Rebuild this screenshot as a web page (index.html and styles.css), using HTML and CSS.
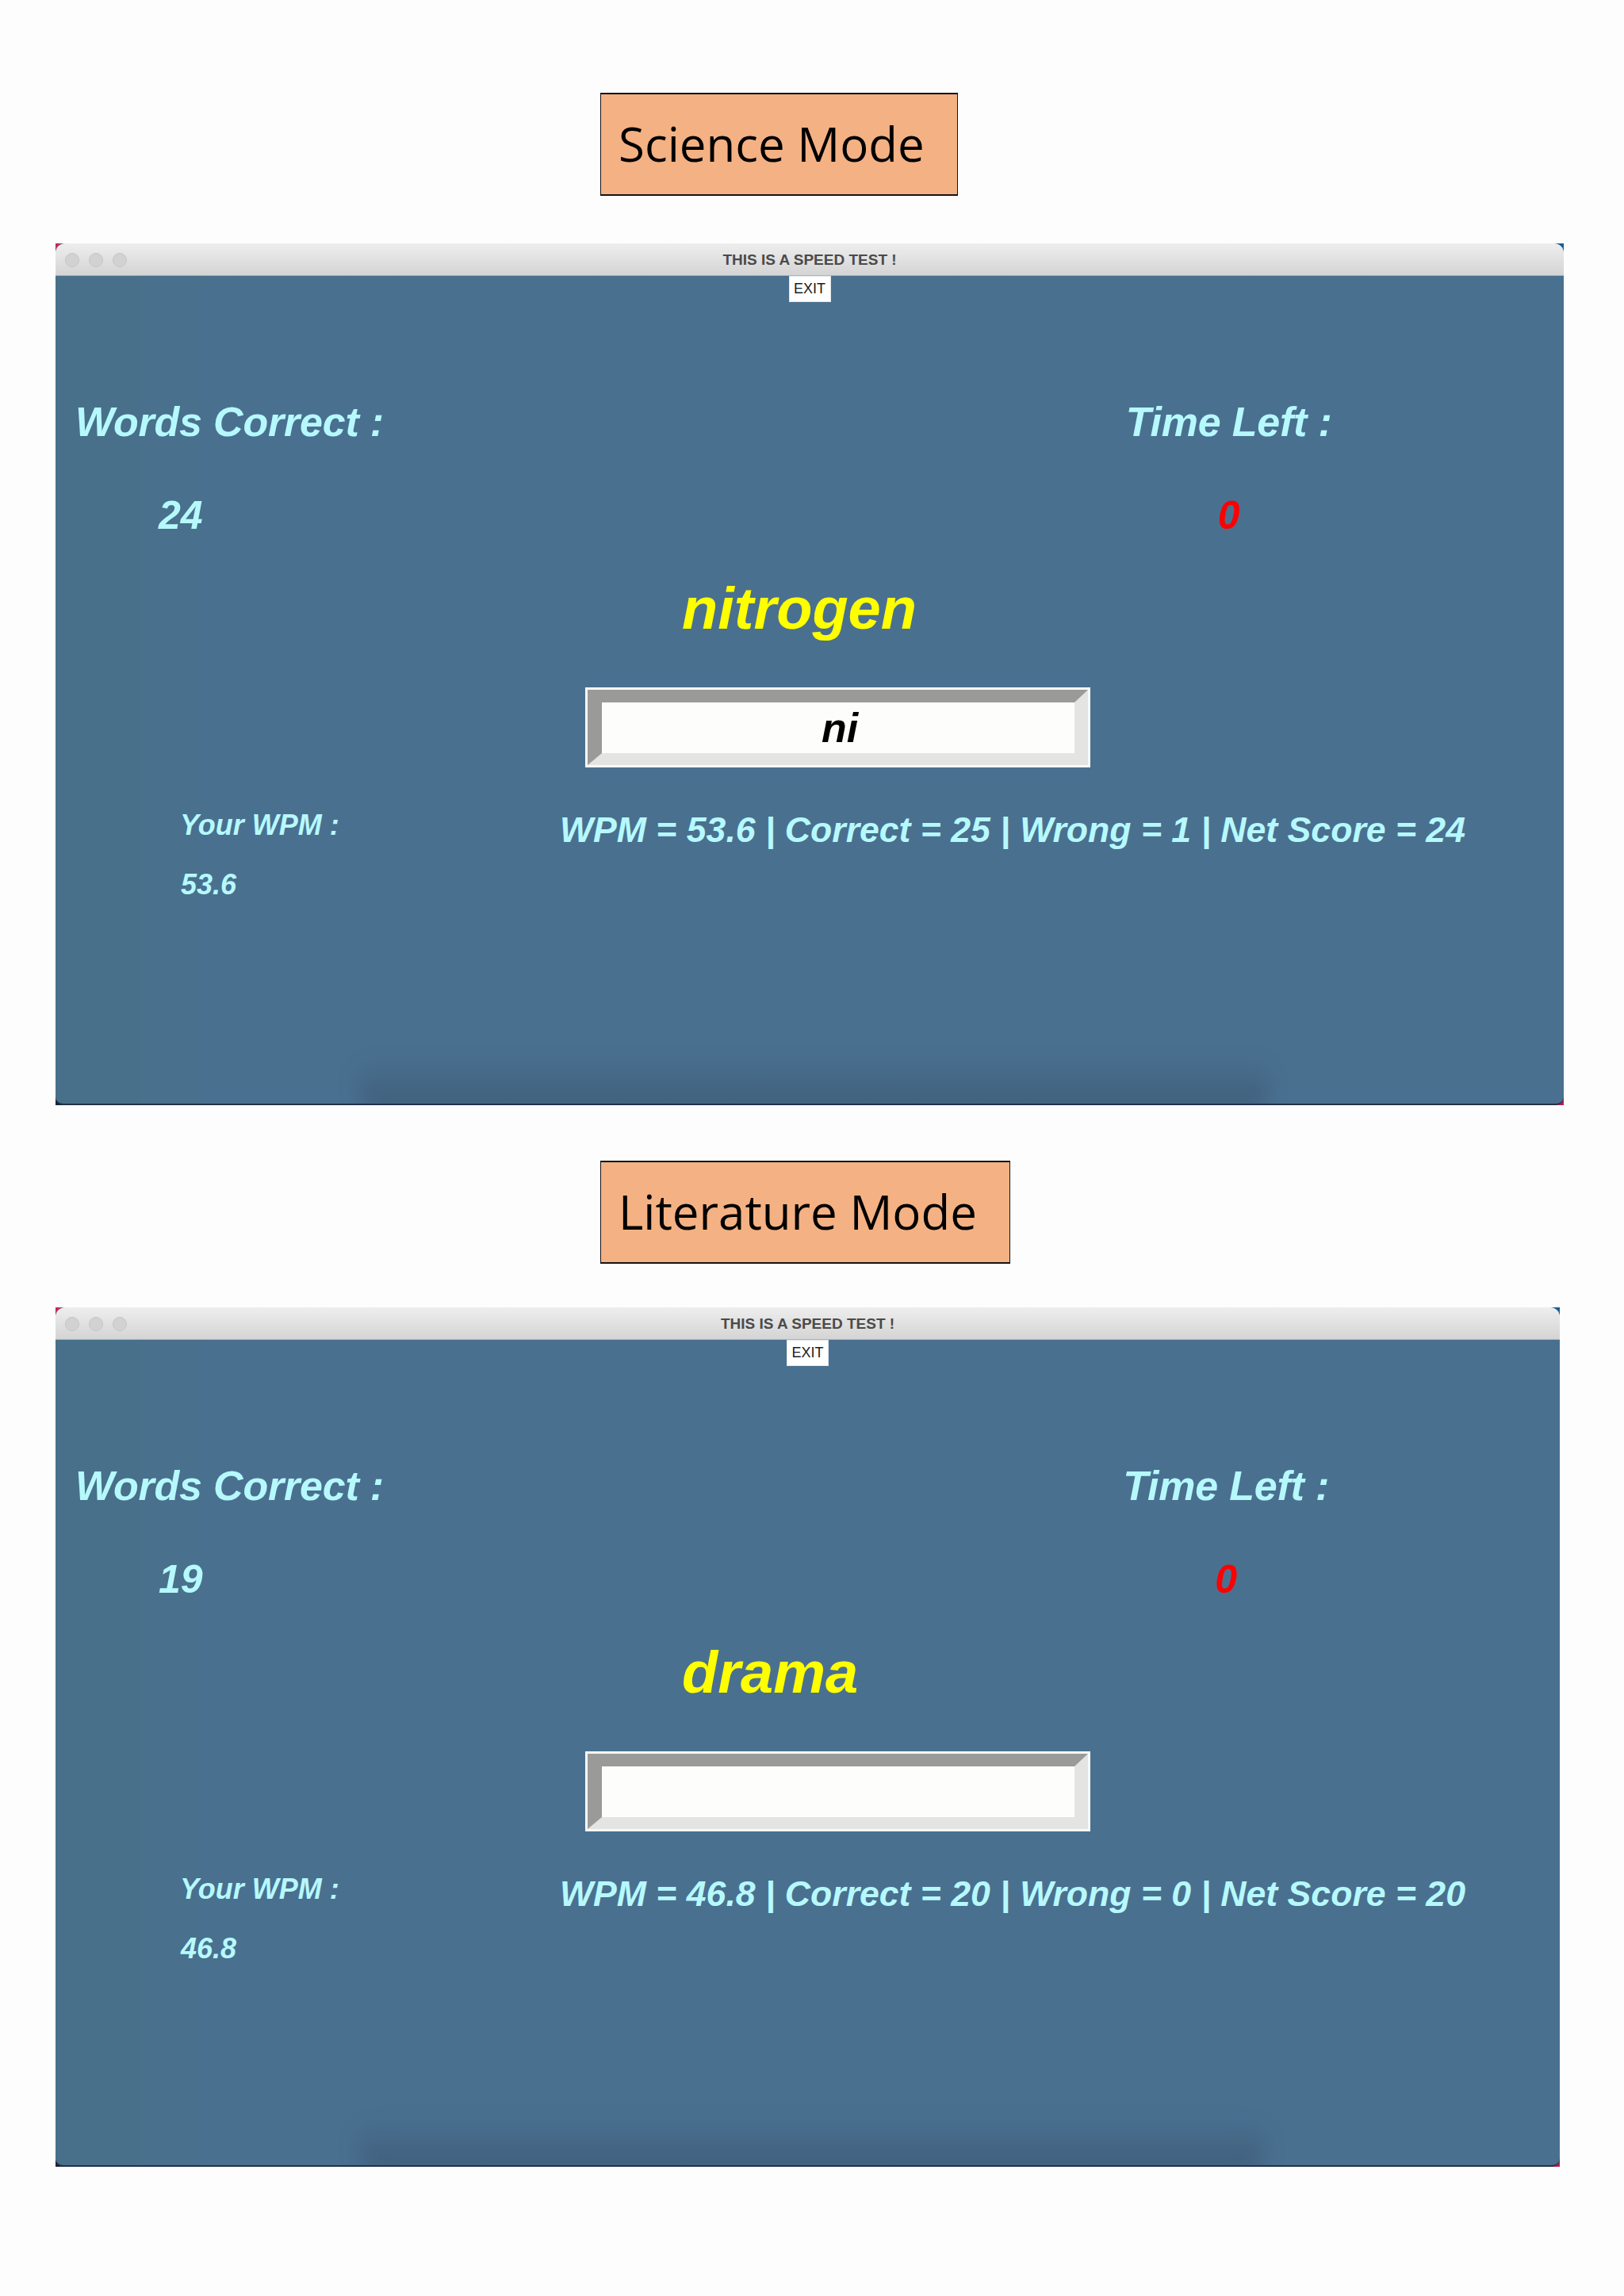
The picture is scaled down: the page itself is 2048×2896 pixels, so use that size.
FILE: index.html
```html
<!DOCTYPE html>
<html lang="en">
<head>
<meta charset="utf-8">
<title>Speed Test Modes</title>
<link rel="stylesheet" href="styles.css">
</head>
<body>
<main class="page">
  <section class="mode mode--science">
    <div class="mode-label">Science Mode</div>
    <div class="window">
      <div class="window-frame">
        <header class="titlebar">
          <div class="lights"><span class="light"></span><span class="light"></span><span class="light"></span></div>
          <div class="title">THIS IS A SPEED TEST !</div>
          <div class="titlebar-spacer"></div>
        </header>
        <div class="window-body">
          <button class="exit" type="button">EXIT</button>
          <div class="scoreboard">
            <div class="stat-label">Words Correct :</div>
            <div class="stat-label">Time Left :</div>
            <div class="stat-value stat-value--words">24</div>
            <div class="stat-value stat-value--time">0</div>
          </div>
          <div class="target-word">nitrogen</div>
          <div class="entry"><div class="entry-bevel"><span class="entry-text">ni</span></div></div>
          <div class="results">
            <div class="wpm-box">
              <div class="wpm-label">Your WPM :</div>
              <div class="wpm-value">53.6</div>
            </div>
            <div class="summary">WPM = 53.6 | Correct = 25 | Wrong = 1 | Net Score = 24</div>
          </div>
        </div>
        <div class="dock-shadow"></div>
      </div>
    </div>
  </section>

  <section class="mode mode--literature">
    <div class="mode-label">Literature Mode</div>
    <div class="window">
      <div class="window-frame">
        <header class="titlebar">
          <div class="lights"><span class="light"></span><span class="light"></span><span class="light"></span></div>
          <div class="title">THIS IS A SPEED TEST !</div>
          <div class="titlebar-spacer"></div>
        </header>
        <div class="window-body">
          <button class="exit" type="button">EXIT</button>
          <div class="scoreboard">
            <div class="stat-label">Words Correct :</div>
            <div class="stat-label">Time Left :</div>
            <div class="stat-value stat-value--words">19</div>
            <div class="stat-value stat-value--time">0</div>
          </div>
          <div class="target-word">drama</div>
          <div class="entry"><div class="entry-bevel"><span class="entry-text"></span></div></div>
          <div class="results">
            <div class="wpm-box">
              <div class="wpm-label">Your WPM :</div>
              <div class="wpm-value">46.8</div>
            </div>
            <div class="summary">WPM = 46.8 | Correct = 20 | Wrong = 0 | Net Score = 20</div>
          </div>
        </div>
        <div class="dock-shadow"></div>
      </div>
    </div>
  </section>
</main>
</body>
</html>
```
FILE: styles.css
```css
* { box-sizing: border-box; }

html, body {
  margin: 0;
  padding: 0;
  background: #fdfdfd;
}

body {
  font-family: "Liberation Sans", Arial, sans-serif;
  width: 2048px;
  min-height: 2896px;
}

.page {
  display: flex;
  flex-direction: column;
  padding-top: 117px;
}

.mode {
  display: flex;
  flex-direction: column;
}

.mode--literature { margin-top: 70px; }

/* orange caption boxes */
.mode-label {
  align-self: flex-start;
  margin-left: 757px;
  height: 130px;
  display: flex;
  align-items: center;
  padding: 0 41px 2px 22px;
  background: #f4b183;
  border: 2px solid #141414;
  border-left-width: 1.5px;
  border-right-width: 1.5px;
  font-family: "Open Sans", "Noto Sans", sans-serif;
  font-size: 60px;
  color: #000;
  line-height: 1;
}

/* macOS-like window */
.window {
  margin-left: 70px;
  background:
    linear-gradient(#c4265a, #c4265a) top left / 16px 16px no-repeat,
    linear-gradient(#145e99, #145e99) top right / 16px 16px no-repeat,
    linear-gradient(#1b2438, #1b2438) bottom left / 16px 16px no-repeat,
    linear-gradient(#b21f50, #b21f50) bottom right / 16px 16px no-repeat;
}

.mode--science .window { margin-top: 60px; width: 1902px; }
.mode--literature .window { margin-top: 55px; width: 1897px; }

.window-frame {
  position: relative;
  display: flex;
  flex-direction: column;
  border-radius: 12px 12px 10px 10px;
  overflow: hidden;
  border-bottom: 2px solid #22304a;
  background:
    linear-gradient(to right, #48708a 0, #48708a 105px, #49708d 105px, #49708d 185px, transparent 185px),
    #4a7090;
}

.mode--science .window-frame { height: 1087px; }
.mode--literature .window-frame { height: 1084px; }

.titlebar {
  height: 41px;
  flex: none;
  display: grid;
  grid-template-columns: 1fr auto 1fr;
  align-items: center;
  background: linear-gradient(#eeeeee, #d4d4d4);
  border-bottom: 1px solid #a9b6c2;
}

.lights {
  display: flex;
  gap: 12px;
  padding-left: 12px;
}

.light {
  width: 18px;
  height: 18px;
  border-radius: 50%;
  background: #d2d2d2;
  border: 1px solid #c5c5c5;
}

.title {
  font-family: "Liberation Sans", Arial, sans-serif;
  font-weight: bold;
  font-size: 19px;
  color: #4b4b4b;
  line-height: 41px;
  white-space: nowrap;
}

.window-body {
  display: flex;
  flex-direction: column;
  color: #b6f9fd;
  font-weight: bold;
  font-style: italic;
}

.exit {
  align-self: center;
  width: 53px;
  height: 33px;
  padding: 0;
  margin: 0;
  background: #ffffff;
  border: 1px solid #e2e6ea;
  border-radius: 0;
  font-family: "Liberation Sans", Arial, sans-serif;
  font-size: 18px;
  font-weight: normal;
  font-style: normal;
  color: #1c1c1c;
  line-height: 31px;
}

.scoreboard {
  margin-top: 125px;
  display: grid;
  grid-template-columns: 70.97% 1fr;
  row-gap: 67px;
}

.stat-label {
  font-size: 52px;
  line-height: 52px;
  padding-left: 25px;
  letter-spacing: -0.2px;
  white-space: nowrap;
}

.stat-label:nth-child(2) { padding-left: 0; }

.stat-value {
  font-size: 50px;
  line-height: 50px;
}

.stat-value--words { padding-left: 130px; }

.stat-value--time {
  padding-left: 116px;
  color: #ff0000;
}

.target-word {
  margin-top: 56px;
  padding-left: 790px;
  font-size: 74px;
  line-height: 74px;
  color: #ffff00;
}

.entry {
  margin-top: 62px;
  margin-left: 668px;
  width: 637px;
  height: 101px;
  padding: 3px;
  background: #f7f9fb;
}

.entry-bevel {
  height: 100%;
  border-style: solid;
  border-width: 16px 17px 15px 18px;
  border-color: #9a9b98 #e4e5e3 #e4e5e3 #9a9b98;
  background: #fdfefc;
  display: flex;
  align-items: center;
  justify-content: center;
}

.entry-text {
  font-size: 52px;
  line-height: 52px;
  color: #000;
  padding-left: 4px;
}

.results {
  margin-top: 55px;
  display: flex;
  align-items: flex-start;
}

.wpm-box {
  width: 636px;
  flex: none;
  padding-left: 157px;
  display: flex;
  flex-direction: column;
}

.wpm-label {
  font-size: 36px;
  line-height: 36px;
  white-space: nowrap;
}

.wpm-value {
  margin-top: 39px;
  margin-left: 1px;
  font-size: 36px;
  line-height: 36px;
}

.summary {
  margin-top: 2px;
  font-size: 44.6px;
  line-height: 44px;
  white-space: nowrap;
}

.dock-shadow {
  position: absolute;
  left: 380px;
  right: 370px;
  bottom: -10px;
  height: 70px;
  border-radius: 30px;
  background: linear-gradient(to bottom, rgba(40, 52, 72, 0), rgba(40, 52, 72, 0.3));
  filter: blur(12px);
  pointer-events: none;
}
```
